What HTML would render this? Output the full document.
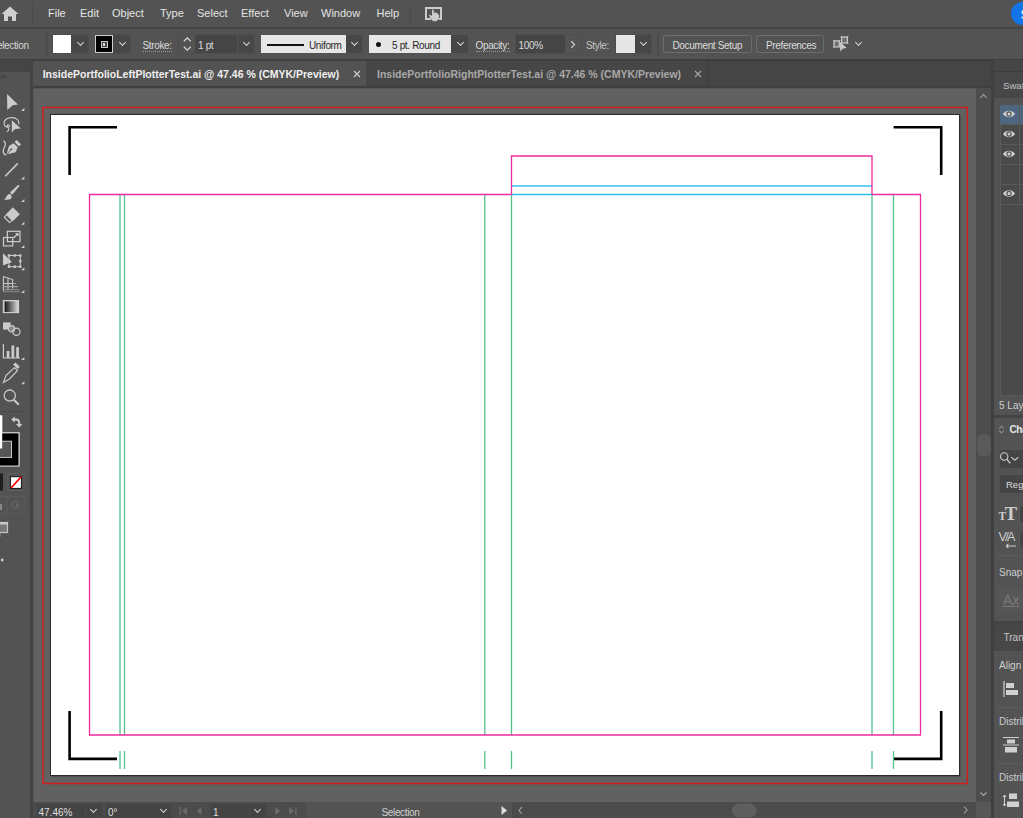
<!DOCTYPE html>
<html><head><meta charset="utf-8">
<style>
*{margin:0;padding:0;box-sizing:border-box}
html,body{width:1023px;height:818px;overflow:hidden;background:#535353;font-family:"Liberation Sans",sans-serif;}
.a{position:absolute}
.t{position:absolute;white-space:nowrap;line-height:1}
.menu{font-size:11px;color:#e4e4e4;top:8px}
.cb{font-size:10px;color:#dcdcdc;letter-spacing:-0.35px;margin-top:1px}
.dd{position:absolute;background:#474747;border-radius:0 2px 2px 0}
.chev{position:absolute;width:5px;height:5px;margin:0.5px 0 0 0.5px;border-right:1.4px solid #d8d8d8;border-bottom:1.4px solid #d8d8d8;transform:rotate(45deg)}
</style></head><body>
<!-- MENU BAR -->
<div class="a" style="left:0;top:0;width:1023px;height:27px;background:#535353"></div>
<div class="a" style="left:0;top:27px;width:1023px;height:2px;background:#434343"></div>
<svg class="a" style="left:1px;top:6px" width="18" height="16" viewBox="0 0 18 16"><path d="M9 0.5 L17.5 8 L15 8 L15 15 L11 15 L11 10.5 L7 10.5 L7 15 L3 15 L3 8 L0.5 8 Z" fill="#d0d0d0"/></svg>
<div class="a" style="left:32px;top:4px;width:1px;height:19px;background:#4a4a4a"></div>
<div class="t menu" style="left:48px">File</div>
<div class="t menu" style="left:80px">Edit</div>
<div class="t menu" style="left:112px">Object</div>
<div class="t menu" style="left:160px">Type</div>
<div class="t menu" style="left:197px">Select</div>
<div class="t menu" style="left:241px">Effect</div>
<div class="t menu" style="left:284px">View</div>
<div class="t menu" style="left:321px">Window</div>
<div class="t menu" style="left:376.5px">Help</div>
<div class="a" style="left:410px;top:4px;width:1px;height:19px;background:#4a4a4a"></div>
<svg class="a" style="left:425px;top:6.8px" width="18" height="16" viewBox="0 0 18 16"><path d="M6 12.1 H1 V1 H16 V12.1 H14" stroke="#cbcbcb" stroke-width="2" fill="none"/><path d="M7 3 Q7.9 1.8 8.8 3 V6.2 L10.3 5.2 L12.6 6.6 L14.3 8.8 L13.8 12 L11.3 14.2 H8.2 L7.2 13.2 L3.8 8.6 Q4.5 7.2 5.8 8 L7 9.3 Z" fill="#cbcbcb"/></svg>
<div class="a" style="left:1011px;top:2px;width:23px;height:23px;border-radius:50%;background:#1473e6"></div><div class="t" style="left:1020.5px;top:8.5px;font-size:12px;color:#fff">S</div>

<!-- CONTROL BAR -->
<div class="a" style="left:0;top:29px;width:1023px;height:30px;background:#535353"></div>
<div class="a" style="left:0;top:59px;width:1023px;height:1px;background:#3e3e3e"></div>
<!-- LEFT TOOLBAR -->
<div class="a" style="left:0;top:60px;width:30px;height:758px;background:#535353"></div>
<div class="a" style="left:0;top:60px;width:30px;height:12px;background:#454545"></div>
<div class="a" style="left:30px;top:60px;width:3px;height:758px;background:#434343"></div>
<!-- TAB BAR -->
<div class="a" style="left:33px;top:60px;width:958px;height:27px;background:#454545"></div>
<div class="a" style="left:33px;top:60px;width:958px;height:1px;background:#3e3e3e"></div>
<div class="a" style="left:33px;top:61px;width:333px;height:25px;background:#535353"></div>
<div class="a" style="left:366px;top:61px;width:341px;height:25px;background:#464646"></div>
<div class="a" style="left:707px;top:61px;width:1px;height:25px;background:#3b3b3b"></div>
<div class="a" style="left:33px;top:86px;width:958px;height:2px;background:#3f3f3f"></div>
<!-- CANVAS -->
<div class="a" style="left:33px;top:88px;width:943px;height:714px;background:#616161"></div><div class="a" style="left:33px;top:88px;width:943px;height:1px;background:#555555"></div><div class="a" style="left:33px;top:88px;width:1px;height:714px;background:#585858"></div>
<div class="a" style="left:976px;top:88px;width:15px;height:714px;background:#4d4d4d"></div>
<!-- STATUS BAR -->
<div class="a" style="left:33px;top:802px;width:943px;height:16px;background:#4b4b4b"></div>
<div class="a" style="left:976px;top:802px;width:15px;height:15px;background:#575757"></div>
<!-- RIGHT PANEL -->
<div class="a" style="left:991px;top:60px;width:3px;height:758px;background:#404040"></div>
<div class="a" style="left:994px;top:60px;width:29px;height:758px;background:#535353"></div>

<!-- CONTROL BAR CONTENT -->
<div class="t cb" style="left:-3px;top:40px;color:#d6d6d6">election</div>
<div class="a" style="left:46px;top:33px;width:2px;height:23px;background:#4b4b4b"></div>
<div class="a" style="left:52px;top:34px;width:37px;height:20px;border:1px solid #4d4d4d;border-radius:2px"></div>
<div class="a" style="left:53px;top:35px;width:18px;height:18px;background:#fff"></div>
<div class="dd" style="left:71px;top:35px;width:17px;height:18px"></div>
<div class="chev" style="left:77px;top:39px"></div>
<div class="a" style="left:94px;top:34px;width:37px;height:20px;border:1px solid #4d4d4d;border-radius:2px"></div>
<div class="a" style="left:95px;top:35px;width:18px;height:18px;background:#000;border:1px solid #cfcfcf"></div>
<div class="a" style="left:100.8px;top:41px;width:6.8px;height:7px;border:1px solid #c4c4c4;background:#4a4a4a"></div>
<div class="a" style="left:103px;top:43px;width:2.4px;height:3px;background:#f4f4f4;border-radius:1px"></div>
<div class="dd" style="left:113px;top:35px;width:17px;height:18px"></div>
<div class="chev" style="left:119px;top:39px"></div>
<div class="t cb" style="left:142.5px;top:40px">Stroke:</div>
<div class="a" style="left:143px;top:51px;width:29px;height:1px;border-top:1px dotted #9a9a9a"></div>
<div class="a" style="left:178px;top:34px;width:77px;height:20px;border:1px solid #4d4d4d;border-radius:2px"></div>
<svg class="a" style="left:181px;top:36px" width="12" height="16" viewBox="0 0 12 16"><path d="M2.8 5.3 L6.3 2 L9.8 5.3 M2.8 10.8 L6.3 14.1 L9.8 10.8" stroke="#d0d0d0" stroke-width="1.3" fill="none"/></svg>
<div class="a" style="left:195px;top:35px;width:42px;height:18px;background:#454545"></div>
<div class="t cb" style="left:198px;top:40px">1 pt</div>
<div class="dd" style="left:238px;top:35px;width:16px;height:18px"></div>
<div class="chev" style="left:243px;top:39px"></div>
<div class="a" style="left:261px;top:35px;width:85px;height:18px;background:#e6e6e6"></div>
<div class="a" style="left:267px;top:44px;width:37px;height:2px;background:#111"></div>
<div class="t cb" style="left:309px;top:40px;color:#262626">Uniform</div>
<div class="dd" style="left:346px;top:35px;width:16px;height:18px"></div>
<div class="chev" style="left:351px;top:39px"></div>
<div class="a" style="left:369px;top:35px;width:82px;height:18px;background:#e6e6e6"></div>
<div class="a" style="left:375.5px;top:41.5px;width:5px;height:5px;border-radius:50%;background:#111"></div>
<div class="t cb" style="left:392px;top:40px;color:#262626">5 pt. Round</div>
<div class="dd" style="left:451px;top:35px;width:17px;height:18px"></div>
<div class="chev" style="left:457px;top:39px"></div>
<div class="t cb" style="left:475.5px;top:40px">Opacity:</div>
<div class="a" style="left:476px;top:51px;width:34px;height:1px;border-top:1px dotted #9a9a9a"></div>
<div class="a" style="left:515px;top:34px;width:67px;height:20px;border:1px solid #4d4d4d;border-radius:2px"></div>
<div class="a" style="left:516px;top:35px;width:49px;height:18px;background:#454545"></div>
<div class="t cb" style="left:518.5px;top:40px">100%</div>
<svg class="a" style="left:566px;top:38px" width="14" height="12" viewBox="0 0 14 12"><path d="M5.3 3.3 L8.5 6.6 L5.3 9.9" stroke="#d0d0d0" stroke-width="1.25" fill="none"/></svg>
<div class="t cb" style="left:586px;top:40px;color:#c4c4c4">Style:</div>
<div class="a" style="left:615px;top:34px;width:37px;height:20px;border:1px solid #4d4d4d;border-radius:2px"></div>
<div class="a" style="left:616px;top:35px;width:19px;height:18px;background:#e6e6e6"></div>
<div class="dd" style="left:635px;top:35px;width:16px;height:18px"></div>
<div class="chev" style="left:640px;top:39px"></div>
<div class="a" style="left:657px;top:33px;width:2px;height:23px;background:#4b4b4b"></div>
<div class="a" style="left:663px;top:35px;width:89px;height:18px;border:1px solid #6d6d6d;border-radius:2px"></div>
<div class="t cb" style="left:672.5px;top:40px">Document Setup</div>
<div class="a" style="left:756px;top:35px;width:68px;height:18px;border:1px solid #6d6d6d;border-radius:2px"></div>
<div class="t cb" style="left:766px;top:40px">Preferences</div>
<svg class="a" style="left:830px;top:34px" width="22" height="20" viewBox="830 34 22 20"><g stroke="#c8c8c8" stroke-width="1.3" fill="#6e6e6e"><rect x="834" y="40.9" width="5.3" height="6"/><rect x="841.6" y="37" width="5.8" height="6"/></g><g stroke="#c8c8c8" stroke-width="0.8"><path d="M833 40 L834.5 41.5 M840.3 40 L838.8 41.5 M833 48 L834.5 46.5 M840.6 36 L842 37.5 M848.4 36 L847 37.5 M848.4 44 L847 42.5"/></g><path d="M840 41.9 L846.8 48 L843 48.5 L840.2 51.6 Z" fill="#cbcbcb"/></svg>
<div class="chev" style="left:855px;top:39px"></div>

<!-- TOOLBAR ICONS -->
<svg class="a" style="left:0;top:60px" width="30" height="520" viewBox="0 60 30 520">
 <g fill="#565656"><rect x="1" y="75" width="1" height="4"/></g>
 <g fill="#3f3f3f"><rect x="1" y="75" width="1" height="3.5"/><rect x="3" y="75" width="1" height="3.5"/><rect x="5" y="75" width="1" height="3.5"/></g>
 <g fill="#cbcbcb" stroke="none">
  <path d="M7 94 L18 104.5 L12.8 105.3 L7.3 110 Z"/>
  <path d="M24.4 107.7 V111 H21 Z"/>
  <path d="M24.4 176.3 V179.4 H21 Z"/>
  <path d="M24.4 199 V202 H21 Z"/>
  <path d="M24.4 221.7 V224.7 H21 Z"/>
  <path d="M24.4 245 V248 H21 Z"/>
  <path d="M24.4 267.3 V270.3 H21 Z"/>
  <path d="M24.4 290 V293 H21 Z"/>
  <path d="M24.4 357 V360 H21 Z"/>
  <path d="M24.4 381.2 V384.2 H21 Z"/>
  <path d="M11.8 120.3 L20.9 128.5 L15.1 129.1 L11.8 132.6 Z"/>
  <path d="M3.9 199.6 C6 198.5 6.5 195.5 8.3 194.3 C9.8 193.5 11.5 194.8 11.7 196.5 C11.8 198.5 10 199.8 7.5 199.8 Z"/>
  <path d="M9.9 192.6 L17.5 185.5 C18.5 184.7 19.7 185.2 19.2 186.3 L12.3 194.8 Z"/>
  <path d="M12.9 207.3 L19.9 214.3 L13 221 L6.2 213.9 Z"/><path d="M6.6 214.6 L4.3 217.2 L9.5 222.5 L12.2 220.4 Z" fill="none" stroke="#cbcbcb" stroke-width="1.1"/>
  <path d="M3 253.2 L12 262 L3 265.6 Z"/><rect x="7.8" y="254.3" width="2.4" height="2.4"/><rect x="13.5" y="254.3" width="2.4" height="2.4"/><rect x="19.1" y="254.3" width="2.4" height="2.4"/><rect x="19.1" y="259.9" width="2.4" height="2.4"/><rect x="19.1" y="265.5" width="2.4" height="2.4"/><rect x="13.5" y="265.5" width="2.4" height="2.4"/><rect x="7.8" y="265.5" width="2.4" height="2.4"/>
  <path d="M3.3 300.1 H18.8 V313 H3.3 Z" fill="#d0d0d0"/>
  <rect x="3" y="322.4" width="7.7" height="7.2"/>
  <path d="M6.4 154.6 L9 146 L13.6 143.2 L17.8 147.3 L15.6 152.3 Z"/>
  <path d="M14.5 142.1 L16.6 140 L21 144.3 L18.9 146.4 Z"/>
  <path d="M13 364.6 L15.5 362.6 L19.7 366.8 L17.7 369 Z"/>
  <rect x="6.7" y="351" width="2.7" height="7"/>
  <rect x="11.5" y="345.4" width="2.7" height="12.6"/>
  <rect x="16.2" y="347.1" width="2.7" height="10.9"/>
 </g>
 <defs><linearGradient id="gr" x1="0" x2="1"><stop offset="0" stop-color="#151515"/><stop offset="1" stop-color="#d8d8d8"/></linearGradient></defs>
 <path d="M11 149.5 L7 154.2" stroke="#535353" stroke-width="0.9"/><circle cx="11.2" cy="149.3" r="1" fill="#535353"/><path d="M14.2 143 L17.8 146.6" stroke="#535353" stroke-width="0.8"/>
 <rect x="4.6" y="301.3" width="13.5" height="11" fill="url(#gr)"/>
 <g fill="none" stroke="#cbcbcb" stroke-width="1.2">
  <path d="M18.6 124.3 C19.5 120.5 17 117.8 12 117.6 C7 117.5 3.8 120 4 123.5 C4.2 126 6 127.2 8.3 127 C9.8 126.7 9.8 124.8 8.5 124.7 C6.8 124.5 6.6 126.8 8.6 128.2 C9.5 129.6 8.2 131 6.8 131.8" stroke-width="1.1"/>
  <path d="M5.2 176.3 L17.8 163.4" stroke-width="1.6"/>
  <path d="M3.3 140.8 C5.5 141.5 6 144 4.5 147 C2.5 150.5 2.8 154.5 6.2 154.8" stroke-width="1.3"/>
  <rect x="7.4" y="231.3" width="12.6" height="10.3"/>
  <rect x="3.5" y="237.5" width="9.2" height="8.4"/>
  <path d="M13.5 238 L18 233.5 M15.5 233.5 H18 V236"/>
  <rect x="9" y="255.5" width="11.3" height="11.2" stroke-width="1"/>
  <path d="M3.4 276.5 V291.6 M3.4 276.5 L12.6 279.6 V288.6 M8 278 V290.2 M3.4 283.5 H12.6" stroke-width="1.1"/><path d="M12.6 283.5 H16" stroke="#9a9a9a"/><path d="M3.4 286.6 H17.9" stroke="#a8a8a8"/><path d="M3.4 289.6 H18.8" stroke="#8e8e8e"/><path d="M3.4 291.6 H20" stroke="#7c7c7c" stroke-width="1.3"/>
  <path d="M4 311.5" />
  <circle cx="11.5" cy="328.8" r="3.2" fill="#8a8a8a"/>
  <circle cx="16.4" cy="331.8" r="3.6"/>
  <path d="M3.4 344 V358 H20"/>
  <path d="M3.4 382.5 L6 375.5 L14.5 367.5 L17.5 370.5 L9.5 379 Z"/>
  <circle cx="9.8" cy="395.6" r="5.6" stroke-width="1.3"/>
  <path d="M13.8 399.8 L18.8 404.7" stroke-width="2"/>
  <path d="M13.8 419.5 H16 C18 419.5 19.2 420.8 19.2 422.8 V424.5" stroke-width="1.9"/><path d="M11.2 419.5 L14.8 416.4 V422.6 Z M16 424 H22.4 L19.2 427.4 Z" fill="#cbcbcb" stroke="none"/>
 </g>
 <rect x="3.3" y="300.6" width="15.3" height="12" fill="none" stroke="#d0d0d0" stroke-width="1"/>
 <path d="M0 411.5 H25" stroke="#4a4a4a" stroke-width="1"/>
 <rect x="0" y="415.5" width="2.2" height="33" fill="#fff"/>
 <rect x="-16" y="433" width="35" height="33" fill="none" stroke="#c8c8c8" stroke-width="1"/>
 <rect x="-16" y="433.5" width="34.5" height="32.5" fill="#000"/>
 <path d="M-16 432.6 H19.2 V466 H-16" fill="none" stroke="#c8c8c8" stroke-width="1"/>
 <rect x="-8" y="441.2" width="19.5" height="16.2" fill="#565656" stroke="#c8c8c8" stroke-width="1"/>
 <rect x="0" y="415.5" width="2.2" height="33" fill="#fff"/>
 <rect x="8" y="473.5" width="17" height="17" fill="none" stroke="#5c5c5c" stroke-width="1"/>
 <rect x="0" y="473.5" width="3" height="17" fill="#1e1e1e"/>
 <rect x="10.4" y="476.7" width="11" height="11.7" fill="#fff" stroke="#111" stroke-width="1"/>
 <path d="M11 488 L21 477" stroke="#f00" stroke-width="1.8"/>
 <rect x="-1" y="496.5" width="26" height="17" fill="none" stroke="#5a5a5a" stroke-width="1"/>
 <path d="M7.5 496.5 V513.5" stroke="#5a5a5a"/>
 <rect x="0" y="504" width="2" height="6" fill="#888"/>
 <circle cx="15.3" cy="504.7" r="3.3" fill="none" stroke="#6e6e6e" stroke-width="1"/><path d="M15.3 504.7 L18 503.5 L18.2 507 Z" fill="#6a6a6a"/>
 <rect x="-4" y="522.5" width="11.5" height="10" fill="#787878" stroke="#c4c4c4" stroke-width="1.2"/>
 <rect x="-4" y="522" width="12" height="2.5" fill="#c8c8c8"/>
 <rect x="-1" y="533" width="1.5" height="4" fill="#8a8a8a"/>
 <circle cx="2.2" cy="560" r="1.4" fill="#cfcfcf"/>
</svg>
<!-- TABS -->
<div class="t" style="left:42.7px;top:69px;font-size:10.5px;font-weight:bold;color:#f0f0f0">InsidePortfolioLeftPlotterTest.ai @ 47.46 % (CMYK/Preview)</div>
<svg class="a" style="left:352px;top:69px" width="10" height="10" viewBox="0 0 10 10"><path d="M2 2 L8 8 M8 2 L2 8" stroke="#cfcfcf" stroke-width="1.1"/></svg>
<div class="t" style="left:377px;top:69px;font-size:10.5px;font-weight:bold;color:#a9a9a9">InsidePortfolioRightPlotterTest.ai @ 47.46 % (CMYK/Preview)</div>
<svg class="a" style="left:693px;top:69px" width="10" height="10" viewBox="0 0 10 10"><path d="M2 2 L8 8 M8 2 L2 8" stroke="#a9a9a9" stroke-width="1.1"/></svg>

<!-- RIGHT PANEL CONTENT -->
<div class="a" style="left:994px;top:60px;width:29px;height:11px;background:#464646"></div>
<div class="a" style="left:994px;top:71px;width:29px;height:1px;background:#3d3d3d"></div>
<div class="a" style="left:994px;top:72px;width:29px;height:25.5px;background:#474747"></div>
<div class="t" style="left:1003px;top:80.5px;font-size:9.6px;color:#c4c4c4">Swatches</div>
<!-- layers list -->
<div class="a" style="left:999.5px;top:104.5px;width:30px;height:291px;background:#4a4a4a;border:1px solid #5a5a5a"></div>
<div class="a" style="left:1000px;top:105px;width:19px;height:19px;background:#4f6680"></div>
<div class="a" style="left:1020px;top:105px;width:5px;height:19px;background:#4f6680"></div>
<div class="a" style="left:1019px;top:105px;width:1px;height:99px;background:#5a5a5a"></div>
<div class="a" style="left:1000px;top:124px;width:25px;height:1px;background:#5a5a5a"></div>
<div class="a" style="left:1000px;top:144px;width:25px;height:1px;background:#5a5a5a"></div>
<div class="a" style="left:1000px;top:164px;width:25px;height:1px;background:#5a5a5a"></div>
<div class="a" style="left:1000px;top:184px;width:25px;height:1px;background:#5a5a5a"></div>
<div class="a" style="left:1000px;top:204px;width:25px;height:1px;background:#5a5a5a"></div>
<svg class="a" style="left:1002px;top:108px" width="14" height="92" viewBox="0 0 14 92">
 <defs><g id="eye"><path d="M1 6 C4 1.8 10 1.8 13 6 C10 10.2 4 10.2 1 6 Z" fill="#d2d2d2"/><circle cx="7" cy="6" r="2.1" fill="none" stroke="#4f4f4f" stroke-width="1.1"/><circle cx="7" cy="6" r="0.9" fill="#d2d2d2"/></g></defs>
 <use href="#eye" y="0"/><use href="#eye" y="20"/><use href="#eye" y="40"/><use href="#eye" y="79.5"/>
</svg>
<div class="t" style="left:999px;top:401px;font-size:10px;color:#cfcfcf">5 Layers</div>
<div class="a" style="left:994px;top:414.5px;width:29px;height:3px;background:#434343"></div>
<!-- character -->
<svg class="a" style="left:998px;top:424px" width="7" height="11" viewBox="0 0 7 11"><path d="M1.3 4.3 L3.5 2.3 L5.7 4.3 M1.3 6.9 L3.5 8.9 L5.7 6.9" fill="none" stroke="#b4b4b4" stroke-width="1"/></svg>
<div class="t" style="left:1009.5px;top:425px;font-size:10px;font-weight:bold;color:#e4e4e4;letter-spacing:-0.4px">Character</div>
<div class="a" style="left:1000px;top:450px;width:30px;height:18px;background:#454545;border-radius:2px"></div>
<svg class="a" style="left:999px;top:451px" width="23" height="16" viewBox="0 0 23 16"><circle cx="5.2" cy="5.5" r="3.7" fill="none" stroke="#cfcfcf" stroke-width="1.1"/><path d="M7.8 8.2 L11.3 12.3" stroke="#cfcfcf" stroke-width="1.3"/><path d="M12.3 6.2 L15.8 9.2 L19.3 6.2" fill="none" stroke="#cfcfcf" stroke-width="1.1"/></svg>
<div class="a" style="left:1000px;top:474.5px;width:30px;height:18px;background:#454545;border-radius:2px"></div>
<div class="t" style="left:1006px;top:480px;font-size:9.5px;color:#dcdcdc">Regular</div>
<div class="t" style="left:998.5px;top:505px;font-family:'Liberation Serif',serif;font-weight:bold;font-size:18.5px;color:#cdcdcd;letter-spacing:-1.5px"><span style="font-size:11.5px">T</span>T</div>
<div class="a" style="left:1019px;top:505px;width:10px;height:19px;background:#454545;border:1px solid #5a5a5a;border-radius:3px"></div>
<div class="t" style="left:998.5px;top:530.5px;font-size:12.5px;color:#cdcdcd;letter-spacing:-1.6px">V/A</div>
<svg class="a" style="left:1005px;top:543px" width="12" height="6" viewBox="0 0 12 6"><path d="M1 3 H11 M1 3 L3.5 0.8 M1 3 L3.5 5.2" stroke="#cfcfcf" stroke-width="1.1" fill="none"/></svg>
<div class="a" style="left:1019px;top:529.5px;width:10px;height:19px;background:#454545;border:1px solid #5a5a5a;border-radius:3px"></div>
<div class="a" style="left:999px;top:555px;width:24px;height:1px;background:#5c5c5c"></div>
<div class="t" style="left:999px;top:568px;font-size:10px;color:#cfcfcf">Snap</div>
<div class="a" style="left:998.5px;top:589px;width:30px;height:22px;background:#575757;border-radius:2px"></div>
<div class="t" style="left:1003px;top:593px;font-size:14px;color:#7a7a7a;text-decoration:underline">Ax</div>
<div class="a" style="left:994px;top:621px;width:29px;height:4px;background:#434343"></div>
<div class="a" style="left:994px;top:625px;width:29px;height:26px;background:#474747"></div>
<div class="t" style="left:1003.5px;top:633px;font-size:10px;color:#c8c8c8">Transform</div>
<div class="t" style="left:999px;top:660.5px;font-size:10px;color:#cfcfcf">Align Objects</div>
<svg class="a" style="left:1003px;top:680px" width="16" height="18" viewBox="0 0 16 18"><path d="M1 1 V17" stroke="#d0d0d0" stroke-width="1.2"/><rect x="3" y="3" width="8" height="5" fill="#d0d0d0"/><rect x="3" y="10" width="12" height="5" fill="#d0d0d0"/></svg>
<div class="a" style="left:999px;top:707px;width:24px;height:1px;background:#5c5c5c"></div>
<div class="t" style="left:999px;top:716.5px;font-size:10px;color:#cfcfcf">Distribute Objects</div>
<svg class="a" style="left:1002px;top:736px" width="18" height="18" viewBox="0 0 18 18"><path d="M1 1.5 H17 M1 9 H17" stroke="#d0d0d0" stroke-width="1.2"/><rect x="5" y="3.5" width="8" height="4" fill="#d0d0d0"/><rect x="3" y="11" width="12" height="5.5" fill="#d0d0d0"/></svg>
<div class="a" style="left:999px;top:763px;width:24px;height:1px;background:#5c5c5c"></div>
<div class="t" style="left:999px;top:772.5px;font-size:10px;color:#cfcfcf">Distribute Spacing</div>
<svg class="a" style="left:1002px;top:792px" width="18" height="17" viewBox="0 0 18 17"><path d="M2.5 3 V14 M1 5 L2.5 3 L4 5 M1 12 L2.5 14 L4 12" stroke="#d0d0d0" stroke-width="1" fill="none"/><rect x="7" y="1.5" width="8" height="5.5" fill="#d0d0d0"/><rect x="5" y="9.5" width="12" height="5.5" fill="#d0d0d0"/></svg>
<!-- v scrollbar -->
<svg class="a" style="left:976px;top:88px" width="15" height="714" viewBox="0 0 15 714">
 <path d="M4.3 9.8 L7.5 6.6 L10.7 9.8" fill="none" stroke="#a0a0a0" stroke-width="1.1"/>
 <rect x="1.2" y="345.5" width="13.6" height="23.5" rx="6.8" fill="#5a5a5a"/>
 <path d="M4.5 704.5 L7.5 707.5 L10.5 704.5" fill="none" stroke="#a8a8a8" stroke-width="1.2"/>
</svg>
<!-- STATUS BAR -->
<div class="a" style="left:33px;top:802px;width:273px;height:16px;background:#4b4b4b"></div>
<div class="a" style="left:306px;top:802px;width:207px;height:16px;background:#535353"></div>
<div class="a" style="left:37px;top:803.5px;width:47.5px;height:14.5px;background:#444444"></div>
<div class="t" style="left:38.5px;top:808px;font-size:10px;color:#dedede">47.46%</div>
<div class="a" style="left:85.5px;top:803.5px;width:16px;height:14.5px;background:#444444"></div>
<div class="chev" style="left:90.5px;top:806px;width:5px;height:5px"></div>
<div class="a" style="left:106px;top:803.5px;width:49px;height:14.5px;background:#444444"></div>
<div class="t" style="left:108px;top:808px;font-size:10px;color:#dedede">0°</div>
<div class="a" style="left:155px;top:803.5px;width:16px;height:14.5px;background:#444444"></div>
<div class="chev" style="left:160px;top:806px;width:5px;height:5px"></div>
<svg class="a" style="left:178px;top:804px" width="130" height="14" viewBox="178 804 130 14">
 <g fill="#6a6a6a"><rect x="179.5" y="807" width="1.3" height="8"/><path d="M187 807 V815 L182 811 Z"/><path d="M201.5 807 V815 L196.5 811 Z"/>
 <path d="M275.3 807 V815 L280.3 811 Z"/><path d="M289.2 807 V815 L294.2 811 Z"/><rect x="295.3" y="807" width="1.3" height="8"/></g>
</svg>
<div class="a" style="left:211px;top:803.5px;width:37.5px;height:14.5px;background:#444444"></div>
<div class="t" style="left:213px;top:808px;font-size:10px;color:#dedede">1</div>
<div class="a" style="left:250px;top:803.5px;width:16px;height:14.5px;background:#444444"></div>
<div class="chev" style="left:254px;top:806px;width:5px;height:5px"></div>
<div class="t" style="left:381.5px;top:808px;font-size:10px;color:#cfcfcf;letter-spacing:-0.35px">Selection</div>
<svg class="a" style="left:499px;top:804px" width="30" height="14" viewBox="0 0 30 14"><path d="M2.5 2 V11 L8 6.5 Z" fill="#dedede"/><path d="M13.5 1 V14" stroke="#474747" stroke-width="1"/><path d="M23 3 L20 6.5 L23 10" fill="none" stroke="#a8a8a8" stroke-width="1.1"/></svg>
<svg class="a" style="left:700px;top:802px" width="276" height="16" viewBox="700 802 276 16">
 <rect x="732" y="803.5" width="24.5" height="14" rx="7" fill="#5f5f5f"/>
 <path d="M964 806.5 L967 810 L964 813.5" fill="none" stroke="#a8a8a8" stroke-width="1.1"/>
</svg>
<!-- ARTBOARD -->
<svg class="a" style="left:0;top:0" width="1023" height="818">
 <rect x="43" y="107.5" width="924.3" height="676" fill="none" stroke="#d01f1f" stroke-width="1.5"/>
 <rect x="51" y="115" width="910" height="662" fill="#505050"/>
 <rect x="50" y="114" width="910" height="662" fill="#2a2a2a"/>
 <rect x="51" y="115" width="908" height="660" fill="#ffffff"/>
 <path d="M117 127.3 H69.6 V175" fill="none" stroke="#000" stroke-width="2.6"/>
 <path d="M893.6 127.3 H941.2 V175" fill="none" stroke="#000" stroke-width="2.6"/>
 <path d="M69.6 711 V758.9 H117" fill="none" stroke="#000" stroke-width="2.6"/>
 <path d="M941.2 711 V758.9 H893.6" fill="none" stroke="#000" stroke-width="2.6"/>
 <g stroke="#55c28a" stroke-width="1.3" fill="none">
  <path d="M120 194.5 V735 M124.5 194.5 V735 M484.8 194.5 V735 M511.5 194.5 V735 M872 194.5 V735 M893.5 194.5 V735"/>
  <path d="M120 751 V769 M124.5 751 V769 M484.8 751 V769 M511.5 751 V769 M872 751 V769 M893.5 751 V769"/>
 </g>
 <path d="M511.5 186 H872" stroke="#6acff5" stroke-width="2"/>
 <path d="M511.5 194.5 H872" stroke="#33bdf0" stroke-width="1.3"/>
 <g stroke="#ee2a9f" stroke-width="1.3" fill="none">
  <path d="M511.5 194.5 H89.5 V735 H920.5 V194.5 H872"/>
  <path d="M511.5 194.5 V156 H872 V194.5"/>
 </g>
</svg>
</body></html>
